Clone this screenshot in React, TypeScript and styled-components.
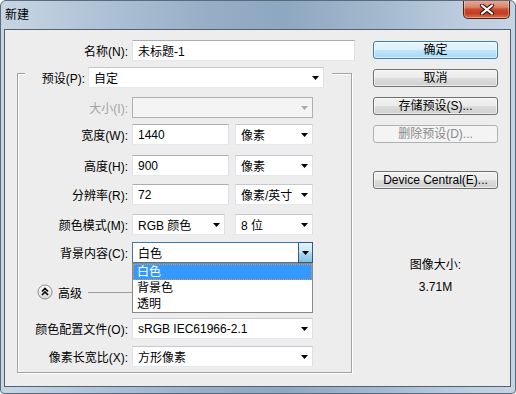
import React from "react";
import styled, { createGlobalStyle } from "styled-components";

const GlobalStyle = createGlobalStyle`
  html, body {
    margin: 0;
    padding: 0;
    background: #fff;
  }
  body {
    font-family: "Liberation Sans", "Noto Sans CJK SC", sans-serif;
    font-size: 12px;
    color: #000;
  }
`;

function Arrow({ color = "#000" }: { color?: string }) {
  return (
    <svg width="7" height="4" viewBox="0 0 7 4">
      <path d="M0 0h7L3.5 4z" fill={color} />
    </svg>
  );
}

function CloseGlyph() {
  return (
    <svg width="16" height="11" viewBox="0 0 16 11">
      <path d="M3 1.5L13 9.5M13 1.5L3 9.5" stroke="#3a1810" strokeWidth="4.2" strokeLinecap="round" />
      <path d="M3 1.5L13 9.5M13 1.5L3 9.5" stroke="#fff" strokeWidth="2.2" strokeLinecap="round" />
    </svg>
  );
}

function CollapseIcon() {
  return (
    <svg width="16" height="16" viewBox="0 0 16 16">
      <defs>
        <linearGradient id="cg" x1="0" y1="0" x2="0" y2="1">
          <stop offset="0" stopColor="#ffffff" />
          <stop offset="1" stopColor="#d6d6d6" />
        </linearGradient>
      </defs>
      <circle cx="8" cy="8" r="7" fill="url(#cg)" stroke="#8c8c8c" />
      <path d="M5 7.5L8 4.5L11 7.5M5 11L8 8L11 11" stroke="#000" strokeWidth="1.6" fill="none" />
    </svg>
  );
}

export default function App() {
  return (
    <>
      <GlobalStyle />
      <Window>
        <TitleBar>
          <Title>新建</Title>
          <CloseButton>
            <CloseGlyph />
          </CloseButton>
        </TitleBar>
        <Client>
          <FormCol>
            {/* 名称 */}
            <Row $top={0}>
              <Label>名称(N):</Label>
              <TextBox $w={223}>未标题-1</TextBox>
            </Row>

            <GroupBox>
              <PresetHeader>
                <Label>预设(P):</Label>
                <Combo $w={236}>
                  <span>自定</span>
                  <Arrow />
                </Combo>
              </PresetHeader>

              <Row $top={9}>
                <Label $disabled>大小(I):</Label>
                <Fields>
                  <Combo $w={181} $disabled>
                    <span />
                    <Arrow color="#a9a9a9" />
                  </Combo>
                </Fields>
              </Row>

              <Row $top={6}>
                <Label>宽度(W):</Label>
                <Fields>
                  <TextBox $w={97}>1440</TextBox>
                  <Combo $w={78}>
                    <span>像素</span>
                    <Arrow />
                  </Combo>
                </Fields>
              </Row>

              <Row $top={10}>
                <Label>高度(H):</Label>
                <Fields>
                  <TextBox $w={97}>900</TextBox>
                  <Combo $w={78}>
                    <span>像素</span>
                    <Arrow />
                  </Combo>
                </Fields>
              </Row>

              <Row $top={8}>
                <Label>分辨率(R):</Label>
                <Fields>
                  <TextBox $w={97}>72</TextBox>
                  <Combo $w={78}>
                    <span>像素/英寸</span>
                    <Arrow />
                  </Combo>
                </Fields>
              </Row>

              <Row $top={9}>
                <Label>颜色模式(M):</Label>
                <Fields>
                  <Combo $w={93}>
                    <span>RGB 颜色</span>
                    <Arrow />
                  </Combo>
                  <Combo $w={78}>
                    <span>8 位</span>
                    <Arrow />
                  </Combo>
                </Fields>
              </Row>

              <Row $top={7}>
                <Label>背景内容(C):</Label>
                <Fields>
                  <Combo $w={181} $focus>
                    <span>白色</span>
                    <DropButton>
                      <Arrow />
                    </DropButton>
                  </Combo>
                  {/* 펼쳐진 목록 */}
                  <DropList>
                    <ListItem $selected>白色</ListItem>
                    <ListItem>背景色</ListItem>
                    <ListItem>透明</ListItem>
                  </DropList>
                </Fields>
              </Row>

              <AdvancedRow>
                <CollapseIcon />
                <AdvancedText>高级</AdvancedText>
                <Rule />
              </AdvancedRow>

              <Row $top={18}>
                <Label>颜色配置文件(O):</Label>
                <Fields>
                  <Combo $w={181}>
                    <span>sRGB IEC61966-2.1</span>
                    <Arrow />
                  </Combo>
                </Fields>
              </Row>

              <Row $top={7}>
                <Label>像素长宽比(X):</Label>
                <Fields>
                  <Combo $w={181}>
                    <span>方形像素</span>
                    <Arrow />
                  </Combo>
                </Fields>
              </Row>
            </GroupBox>
          </FormCol>

          <SideCol>
            <Button $top={0} $primary>确定</Button>
            <Button $top={10}>取消</Button>
            <Button $top={10}>存储预设(S)...</Button>
            <Button $top={10} $disabled>删除预设(D)...</Button>
            <Button $top={28}>Device Central(E)...</Button>
            <Info>
              <InfoLine>图像大小:</InfoLine>
              <InfoLine>3.71M</InfoLine>
            </Info>
          </SideCol>
        </Client>
      </Window>
    </>
  );
}

const Window = styled.div`
  width: 516px;
  height: 394px;
  box-sizing: border-box;
  border: 1px solid #5b6b7e;
  border-radius: 6px 6px 4px 4px;
  background: linear-gradient(
    90deg,
    #c8d6e3 0%,
    #b3c6d8 16%,
    #96aec6 40%,
    #8ea8c1 55%,
    #a1b7cc 72%,
    #b9cbdc 88%,
    #c6d4e2 100%
  );
  display: flex;
  flex-direction: column;
  overflow: hidden;
`;

const TitleBar = styled.div`
  height: 28px;
  display: flex;
  align-items: flex-start;
  justify-content: space-between;
  padding-left: 4px;
`;

const Title = styled.div`
  padding-top: 6px;
  line-height: 16px;
  color: #000;
`;

const CloseButton = styled.div`
  width: 47px;
  height: 19px;
  margin-top: -1px;
  margin-right: 5px;
  box-sizing: border-box;
  border: 1px solid #4e2117;
  border-top: none;
  border-radius: 0 0 5px 5px;
  background: linear-gradient(
    #e9ab9a 0%,
    #dc8369 40%,
    #c94a2d 52%,
    #c23f1f 75%,
    #d8704c 100%
  );
  box-shadow: inset 0 0 0 1px rgba(255, 255, 255, 0.35);
  display: flex;
  align-items: center;
  justify-content: center;
`;

const Client = styled.div`
  flex: 1;
  margin: 0 4px 6px 3px;
  border: 1px solid #55616f;
  background: #ededed;
  display: flex;
  padding: 10px 12px 0 0;
`;

const FormCol = styled.div`
  width: 350px;
  display: flex;
  flex-direction: column;
`;

const SideCol = styled.div`
  width: 125px;
  margin-left: 18px;
  padding-top: 1px;
  display: flex;
  flex-direction: column;
`;

const Row = styled.div<{ $top: number }>`
  display: flex;
  align-items: center;
  height: 21px;
  margin-top: ${(p) => p.$top}px;
`;

const Label = styled.div<{ $disabled?: boolean }>`
  flex: 1;
  text-align: right;
  margin-right: 4px;
  white-space: nowrap;
  color: ${(p) => (p.$disabled ? "#a3a3a3" : "#000")};
`;

const Fields = styled.div`
  width: 181px;
  height: 21px;
  display: flex;
  justify-content: space-between;
  position: relative;
`;

const TextBox = styled.div<{ $w: number }>`
  width: ${(p) => p.$w}px;
  height: 21px;
  box-sizing: border-box;
  border: 1px solid;
  border-color: #abadb3 #dbdfe6 #e3e9ef #e2e3ea;
  background: #fff;
  padding: 0 5px;
  display: flex;
  align-items: center;
`;

const Combo = styled.div<{ $w: number; $disabled?: boolean; $focus?: boolean }>`
  width: ${(p) => p.$w}px;
  height: 21px;
  box-sizing: border-box;
  border: 1px solid;
  border-color: ${(p) =>
    p.$focus
      ? "#3d7bad"
      : p.$disabled
      ? "#adb2b5"
      : "#c5c9cf #dbdfe6 #e3e9ef #e2e3ea"};
  background: ${(p) => (p.$disabled ? "#f4f4f4" : "#fff")};
  padding: ${(p) => (p.$focus ? "0 0 0 5px" : "0 4px 0 5px")};
  display: flex;
  align-items: center;
  justify-content: space-between;
  white-space: nowrap;
  svg {
    margin-top: 1px;
  }
`;

const DropButton = styled.div`
  align-self: stretch;
  width: 15px;
  box-sizing: border-box;
  border: 1px solid #2f5c82;
  margin: -1px -1px -1px 0;
  background: linear-gradient(#e3f3fc 0%, #c9e7f8 45%, #a9d6f1 55%, #86bfe2 100%);
  display: flex;
  align-items: center;
  justify-content: center;
`;

const DropList = styled.div`
  position: absolute;
  top: 100%;
  left: 0;
  right: 0;
  z-index: 5;
  background: #fff;
  border: 1px solid #8a8a8a;
`;

const ListItem = styled.div<{ $selected?: boolean }>`
  height: 16px;
  line-height: 16px;
  padding-left: 4px;
  background: ${(p) => (p.$selected ? "#3399ff" : "#fff")};
  color: ${(p) => (p.$selected ? "#fff" : "#000")};
  outline: ${(p) => (p.$selected ? "1px dotted #e8914a" : "none")};
  outline-offset: -1px;
`;

const GroupBox = styled.div`
  margin: 12px 3px 0 12px;
  border: 1px solid #a3a3a3;
  box-shadow: 1px 1px 0 #fff, inset 1px 1px 0 #fff;
  padding: 0 38px 5px 0;
  display: flex;
  flex-direction: column;
`;

const PresetHeader = styled.div`
  display: flex;
  align-items: center;
  height: 21px;
  margin: -7px -19px 0 7px;
  padding-right: 8px;
  background: #ededed;
  ${Label} {
    margin-right: 3px;
  }
`;

const AdvancedRow = styled.div`
  display: flex;
  align-items: center;
  height: 16px;
  margin-top: 21px;
  padding-left: 19px;
`;

const AdvancedText = styled.span`
  margin-left: 5px;
`;

const Rule = styled.div`
  flex: 1;
  height: 1px;
  margin-left: 6px;
  background: #9a9a9a;
`;

const Button = styled.div<{ $top: number; $primary?: boolean; $disabled?: boolean }>`
  height: 18px;
  margin-top: ${(p) => p.$top}px;
  box-sizing: border-box;
  border: 1px solid
    ${(p) => (p.$primary ? "#3c7fb1" : p.$disabled ? "#adb2b5" : "#707070")};
  border-radius: 3px;
  background: ${(p) =>
    p.$primary
      ? "linear-gradient(#eaf6fd 0%, #d9f0fc 50%, #bee6fd 51%, #a7d9f5 100%)"
      : p.$disabled
      ? "#f4f4f4"
      : "linear-gradient(#f2f2f2 0%, #ebebeb 50%, #dddddd 51%, #cfcfcf 100%)"};
  box-shadow: ${(p) =>
    p.$disabled ? "none" : "inset 0 0 0 1px rgba(255, 255, 255, 0.6)"};
  color: ${(p) => (p.$disabled ? "#8a8a8a" : "#000")};
  text-align: center;
  line-height: 16px;
  white-space: nowrap;
`;

const Info = styled.div`
  margin-top: 68px;
  display: flex;
  flex-direction: column;
  align-items: center;
  gap: 6px;
`;

const InfoLine = styled.div`
  line-height: 16px;
`;
